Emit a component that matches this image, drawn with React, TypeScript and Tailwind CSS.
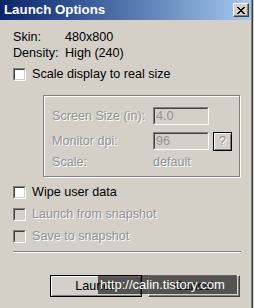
import React from "react";

// Classic sunken checkbox
function CheckBox({ disabled }: { disabled?: boolean }) {
  return (
    <div className="w-[13px] h-[13px] shrink-0 border border-t-[#808080] border-l-[#808080] border-b-white border-r-white">
      <div
        className={`w-full h-full border border-t-[#404040] border-l-[#404040] border-b-[#d4d0c8] border-r-[#d4d0c8] ${
          disabled ? "bg-[#d4d0c8]" : "bg-white"
        }`}
      />
    </div>
  );
}

function CheckRow({ label, disabled }: { label: string; disabled?: boolean }) {
  return (
    <div className="flex items-center h-[13px] pl-[13px]">
      <CheckBox disabled={disabled} />
      <span
        className={`ml-[6px] leading-[13px] ${
          disabled ? "text-[#929292] [text-shadow:1px_1px_0_#fff]" : "text-black"
        }`}
      >
        {label}
      </span>
    </div>
  );
}

// Disabled edit box
function EditBox({ value }: { value: string }) {
  return (
    <div className="w-[56px] h-[18px] border border-t-[#808080] border-l-[#808080] border-b-white border-r-white">
      <div className="w-full h-full border border-t-[#404040] border-l-[#404040] border-b-[#d4d0c8] border-r-[#d4d0c8] bg-[#d4d0c8] pl-[1px] leading-[14px] text-[#929292]">
        {value}
      </div>
    </div>
  );
}

const dimText = "text-[#929292] [text-shadow:1px_1px_0_#fff]";

export default function App() {
  return (
    <div
      className="w-[254px] h-[308px] bg-[#d4d0c8] overflow-hidden text-[12.6px] text-black"
      style={{ fontFamily: '"Liberation Sans", Arial, sans-serif' }}
    >
      <div className="relative w-[253px] h-[308px] border-r border-[#404040]">
        <div className="w-full h-full border-r border-[#808080] flex flex-col">
          {/* TITLE BAR */}
          <div className="h-[20px] shrink-0 flex items-center justify-between pl-[4px] pr-[2px] bg-gradient-to-r from-[#0a246a] to-[#a6caf0]">
            <span className="text-white font-bold text-[13.3px] leading-[20px]">Launch Options</span>
            <button className="w-[16px] h-[14px] flex items-center justify-center bg-[#d4d0c8] border border-t-white border-l-white border-b-[#404040] border-r-[#404040] shadow-[inset_-1px_-1px_#808080]">
              <svg width="8" height="7" viewBox="0 0 8 7" shapeRendering="crispEdges">
                <path
                  d="M0 0h2v1H0zM6 0h2v1H6zM1 1h2v1H1zM5 1h2v1H5zM2 2h4v1H2zM3 3h2v1H3zM2 4h4v1H2zM1 5h2v1H1zM5 5h2v1H5zM0 6h2v1H0zM6 6h2v1H6z"
                  fill="#000"
                />
              </svg>
            </button>
          </div>

          {/* INFO */}
          <div className="flex flex-col pl-[13px] mt-[9px]">
            <div className="flex h-[16px] leading-[16px]">
              <span className="w-[52px]">Skin:</span>
              <span>480x800</span>
            </div>
            <div className="flex h-[16px] leading-[16px]">
              <span className="w-[52px]">Density:</span>
              <span>High (240)</span>
            </div>
          </div>

          <div className="mt-[7px]">
            <CheckRow label="Scale display to real size" />
          </div>

          {/* GROUP BOX */}
          <div className="ml-[43px] mt-[14px] w-[197px] h-[82px] border border-[#808080] shadow-[inset_1px_1px_#fff,1px_1px_#fff] pl-[8px] pt-[11px] flex flex-col">
            <div className="flex items-center h-[18px]">
              <span className={`w-[101px] ${dimText}`}>Screen Size (in):</span>
              <EditBox value="4.0" />
            </div>
            <div className="flex items-center h-[18px] mt-[7px]">
              <span className={`w-[101px] ${dimText}`}>Monitor dpi:</span>
              <EditBox value="96" />
              <div className="ml-[4px] w-[19px] h-[19px] border border-black">
                <div className="w-full h-full flex items-center justify-center shadow-[inset_1px_1px_#fff,inset_-1px_-1px_#808080]">
                  <span className={dimText}>?</span>
                </div>
              </div>
            </div>
            <div className="flex h-[13px] leading-[13px] mt-[6px]">
              <span className={`w-[101px] ${dimText}`}>Scale:</span>
              <span className={dimText}>default</span>
            </div>
          </div>

          {/* OPTIONS */}
          <div className="flex flex-col gap-[9px] mt-[9px]">
            <CheckRow label="Wipe user data" />
            <CheckRow label="Launch from snapshot" disabled />
            <CheckRow label="Save to snapshot" disabled />
          </div>

          {/* SEPARATOR */}
          <div className="ml-[13px] mt-[8px] w-[228px] h-[2px] border-t border-t-[#808080] border-b border-b-white" />

          {/* BUTTONS */}
          <div className="flex ml-[50px] mt-[22px] gap-[6px]">
            <button className="w-[92px] h-[22px] border border-black">
              <div className="w-full h-full flex items-center justify-center shadow-[inset_1px_1px_#fff,inset_-1px_-1px_#808080]">
                Launch
              </div>
            </button>
            <button className="w-[92px] h-[22px] border border-t-white border-l-white border-b-[#404040] border-r-[#404040] shadow-[inset_-1px_-1px_#808080] flex items-center justify-center">
              Cancel
            </button>
          </div>

          {/* watermark overlay */}
          <div className="absolute left-[98px] top-[275px] w-[139px] h-[19px] bg-black/60 flex items-center pl-[2px]">
            <span className="text-white text-[13px] leading-[19px]">http://calin.tistory.com</span>
          </div>
        </div>
      </div>
    </div>
  );
}
